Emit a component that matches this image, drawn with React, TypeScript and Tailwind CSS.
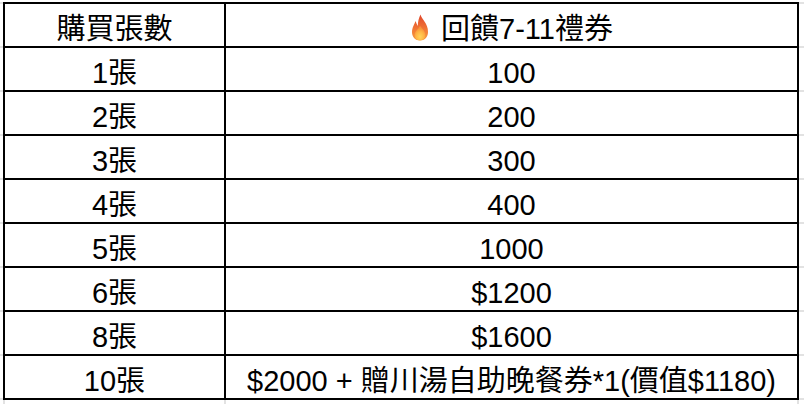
import React from "react";

const rows: [string, string][] = [
  ["1張", "100"],
  ["2張", "200"],
  ["3張", "300"],
  ["4張", "400"],
  ["5張", "1000"],
  ["6張", "$1200"],
  ["8張", "$1600"],
  ["10張", "$2000 + 贈川湯自助晚餐券*1(價值$1180)"],
];

function Flame() {
  return (
    <svg width="20" height="29" viewBox="0 0 20 28" className="mr-[11px] mb-[2px] shrink-0">
      <defs>
        <linearGradient id="fo" x1="0" y1="0" x2="0" y2="1">
          <stop offset="0" stopColor="#e0452b" />
          <stop offset="0.6" stopColor="#f27a36" />
          <stop offset="1" stopColor="#f59a3c" />
        </linearGradient>
        <radialGradient id="fi" cx="0.5" cy="0.75" r="0.6">
          <stop offset="0" stopColor="#ffd45a" />
          <stop offset="0.6" stopColor="#ffb444" />
          <stop offset="1" stopColor="#f7923a" />
        </radialGradient>
      </defs>
      <path
        d="M10.5 1 C 11.5 6, 18 9.5, 18 18.5 C 18 23.8, 14.5 27, 10 27 C 5.5 27, 2 23.8, 2 18.5 C 2 13.5, 4.5 11, 5.5 7.5 C 6.5 9.5, 6.8 11, 7.8 12.5 C 7.8 8.5, 8.8 4.5, 10.5 1 Z"
        fill="url(#fo)"
      />
      <path
        d="M10 12.5 C 12.5 15.5, 15.5 18, 15.5 21.8 C 15.5 24.8, 13 26.8, 10 26.8 C 7 26.8, 4.5 24.8, 4.5 21.8 C 4.5 18, 8 16, 10 12.5 Z"
        fill="url(#fi)"
      />
    </svg>
  );
}

export default function App() {
  const font = { fontFamily: '"Liberation Sans", "Noto Sans CJK TC", sans-serif' };
  const cell =
    "bg-white flex items-end justify-center pb-[2px] text-[29px] leading-[29px] text-black whitespace-nowrap";
  return (
    <div
      className="w-[804px] h-[404px] bg-white grid grid-cols-[3px_796px_5px] grid-rows-[2px_398px_4px] overflow-hidden"
      style={font}
    >
      <div className="bg-white" />
      <div className="bg-white" />
      <div className="bg-white" />

      <div className="bg-[#e2e2e2] py-[2px] grid grid-rows-[repeat(9,42px)] gap-y-[2px]">
        {Array.from({ length: 9 }).map((_, i) => (
          <div key={i} className="bg-white" />
        ))}
      </div>

      <div className="bg-black p-[2px] grid grid-cols-[219px_571px] grid-rows-[repeat(9,42px)] gap-[2px]">
        <div className={cell}>
          <span>購買張數</span>
        </div>
        <div className={cell}>
          <Flame />
          <span>回饋7-11禮券</span>
        </div>
        {rows.map(([a, b], i) => (
          <React.Fragment key={i}>
            <div className={cell}>
              <span>{a}</span>
            </div>
            <div className={cell}>
              <span>{b}</span>
            </div>
          </React.Fragment>
        ))}
      </div>

      <div className="bg-[#e2e2e2] py-[2px] grid grid-rows-[repeat(9,42px)] gap-y-[2px]">
        {Array.from({ length: 9 }).map((_, i) => (
          <div key={i} className="bg-white" />
        ))}
      </div>

      <div className="bg-white" />
      <div className="bg-[#e2e2e2] px-[2px] grid grid-cols-[219px_571px] gap-x-[2px]">
        <div className="bg-white" />
        <div className="bg-white" />
      </div>
      <div className="bg-white" />
    </div>
  );
}
